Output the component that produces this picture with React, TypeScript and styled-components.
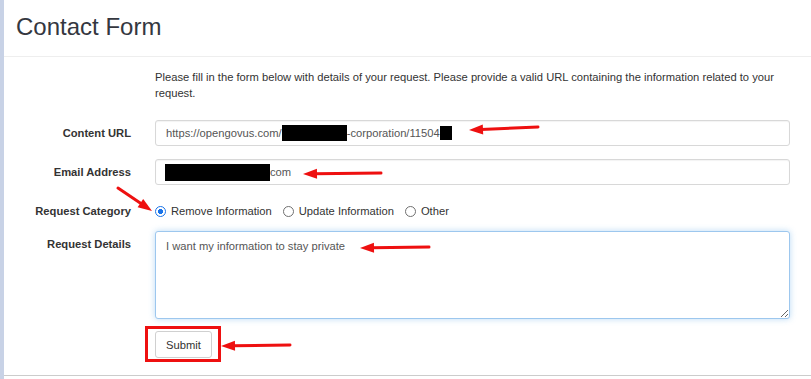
import styled, { createGlobalStyle } from "styled-components";

const GlobalStyle = createGlobalStyle`
  html, body {
    margin: 0;
    padding: 0;
    background: #fff;
  }
  body {
    font-family: "Liberation Sans", Arial, sans-serif;
    font-size: 11.2px;
    color: #333;
  }
`;

type ArrowProps = { x1: number; y1: number; x2: number; y2: number };

// annotation arrow: tail (x1,y1) -> tip (x2,y2)
const Arrow = ({ x1, y1, x2, y2 }: ArrowProps) => {
  const dx = x2 - x1;
  const dy = y2 - y1;
  const len = Math.hypot(dx, dy);
  const ux = dx / len;
  const uy = dy / len;
  const head = 14;
  const half = 5;
  const bx = x2 - ux * head;
  const by = y2 - uy * head;
  const pts = [
    `${x2},${y2}`,
    `${bx - uy * half},${by + ux * half}`,
    `${bx + uy * half},${by - ux * half}`,
  ].join(" ");
  return (
    <g>
      <line
        x1={x1}
        y1={y1}
        x2={bx + ux * 2}
        y2={by + uy * 2}
        stroke="#ee1010"
        strokeWidth={3}
        strokeLinecap="round"
      />
      <polygon points={pts} fill="#ee1010" />
    </g>
  );
};

const arrows: ArrowProps[] = [
  { x1: 538, y1: 127, x2: 469, y2: 130 },
  { x1: 381, y1: 173, x2: 303, y2: 174 },
  { x1: 118, y1: 188, x2: 152, y2: 211 },
  { x1: 429, y1: 247, x2: 360, y2: 248 },
  { x1: 290, y1: 345, x2: 221, y2: 346 },
];

const options = [
  { label: "Remove Information", checked: true },
  { label: "Update Information", checked: false },
  { label: "Other", checked: false },
];

export default function App() {
  return (
    <>
      <GlobalStyle />
      <Page>
        <Header>
          <Title>Contact Form</Title>
        </Header>
        <Form>
          <Row $mb={19}>
            <span />
            <Intro>
              Please fill in the form below with details of your request. Please
              provide a valid URL containing the information related to your
              request.
            </Intro>
          </Row>
          <Row $mb={13}>
            <Label>Content URL</Label>
            <Field role="textbox">
              https://opengovus.com/
              <Redacted $w={65} $h={16} />
              -corporation/11504
              <Redacted $w={12} $h={14} />
            </Field>
          </Row>
          <Row $mb={13}>
            <Label>Email Address</Label>
            <Field role="textbox">
              <Redacted $w={105} $h={17} $ml={-1} />
              com
            </Field>
          </Row>
          <Row $mb={7}>
            <Label>Request Category</Label>
            <RadioGroup>
              {options.map((o) => (
                <RadioOption key={o.label}>
                  <Radio
                    type="radio"
                    name="category"
                    defaultChecked={o.checked}
                  />
                  {o.label}
                </RadioOption>
              ))}
            </RadioGroup>
          </Row>
          <Row $mb={12}>
            <Label>Request Details</Label>
            <Details defaultValue="I want my information to stay private" />
          </Row>
          <Row $mb={17}>
            <span />
            <ButtonWrap>
              <SubmitButton type="button">Submit</SubmitButton>
              <Highlight />
            </ButtonWrap>
          </Row>
        </Form>
        <Footer />
        <Overlay width={811} height={379}>
          {arrows.map((a, i) => (
            <Arrow key={i} {...a} />
          ))}
        </Overlay>
      </Page>
    </>
  );
}

const Page = styled.div`
  position: relative;
  box-sizing: border-box;
  height: 100vh;
  min-height: 379px;
  border-left: 4px solid #c8d2e6;
  overflow: hidden;
`;

const Header = styled.div`
  padding: 14px 12px 16px 12px;
  border-bottom: 1px solid #eeeeee;
`;

const Title = styled.h1`
  margin: 0;
  font-size: 24px;
  line-height: 26px;
  font-weight: normal;
  color: #34373f;
`;

const Form = styled.div`
  padding: 12px 21px 0 0;
`;

const Row = styled.div<{ $mb: number }>`
  display: grid;
  grid-template-columns: 127px 1fr;
  column-gap: 24px;
  align-items: start;
  margin-bottom: ${({ $mb }) => $mb}px;
`;

const Intro = styled.p`
  margin: 0;
  line-height: 16px;
  color: #333;
`;

const Label = styled.label`
  text-align: right;
  font-weight: bold;
  line-height: 26px;
  color: #333;
`;

const Field = styled.div`
  box-sizing: border-box;
  height: 26px;
  display: flex;
  align-items: center;
  padding: 0 10px;
  border: 1px solid #d8d8d8;
  border-radius: 3px;
  box-shadow: inset 0 1px 1px rgba(0, 0, 0, 0.05);
  color: #555;
  white-space: nowrap;
  overflow: hidden;
`;

const Redacted = styled.span<{ $w: number; $h: number; $ml?: number }>`
  display: inline-block;
  width: ${({ $w }) => $w}px;
  height: ${({ $h }) => $h}px;
  margin-left: ${({ $ml }) => $ml ?? 0}px;
  background: #000;
`;

const RadioGroup = styled.div`
  height: 26px;
  display: flex;
  align-items: center;
  gap: 11px;
`;

const RadioOption = styled.label`
  display: flex;
  align-items: center;
  color: #333;
`;

const Radio = styled.input`
  appearance: none;
  box-sizing: border-box;
  width: 11px;
  height: 11px;
  margin: 0 5px 0 0;
  border-radius: 50%;
  border: 1px solid #707070;
  background: #fff;
  &:checked {
    border: 1.5px solid #1a73e8;
    background: radial-gradient(circle, #1a73e8 0 2.3px, #fff 2.8px);
  }
`;

const Details = styled.textarea`
  box-sizing: border-box;
  width: 100%;
  height: 88px;
  margin: 0;
  padding: 6px 10px;
  font-family: inherit;
  font-size: 11.2px;
  line-height: 16px;
  color: #555;
  border: 1px solid #9dc7ee;
  border-radius: 3px;
  box-shadow: 0 0 6px rgba(102, 175, 233, 0.45);
  outline: none;
  resize: vertical;
`;

const ButtonWrap = styled.span`
  position: relative;
  display: inline-flex;
  justify-self: start;
`;

const SubmitButton = styled.button`
  box-sizing: border-box;
  height: 27px;
  padding: 0 10px;
  font-family: inherit;
  font-size: 11.2px;
  color: #333;
  background: #fff;
  border: 1px solid #d0d0d0;
  border-radius: 3px;
`;

const Highlight = styled.span`
  position: absolute;
  box-sizing: border-box;
  top: -5px;
  left: -10px;
  right: -9px;
  bottom: -4px;
  border: 3px solid #ee1010;
`;

const Footer = styled.div`
  border-top: 1px solid #cccccc;
`;

const Overlay = styled.svg`
  position: absolute;
  top: 0;
  left: -4px;
  pointer-events: none;
`;
